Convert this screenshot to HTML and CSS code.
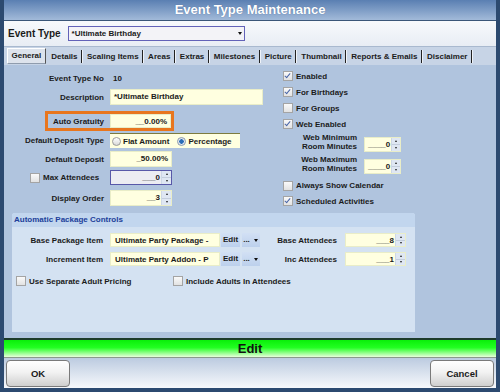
FILE: index.html
```html
<!DOCTYPE html>
<html lang="en">
<head>
    <meta charset="UTF-8">
    <title>Event Type Maintenance</title>
    <link rel="stylesheet" href="styles.css">
</head>
<body>
    <div class="window">
        <div class="titlebar">Event Type Maintenance</div>

        <div class="typebar">
            <span class="type-label">Event Type</span>
            <div class="combo">*Ultimate Birthday<span class="combo-arrow"></span></div>
        </div>

        <div class="tabs">
            <span class="tab active">General</span>
            <span class="tab">Details</span>
            <span class="tab">Scaling Items</span>
            <span class="tab">Areas</span>
            <span class="tab">Extras</span>
            <span class="tab">Milestones</span>
            <span class="tab">Picture</span>
            <span class="tab">Thumbnail</span>
            <span class="tab">Reports &amp; Emails</span>
            <span class="tab">Disclaimer</span>
        </div>

        <div class="body">
            <div class="columns">
                <div class="col-left">
                    <div class="row r-no">
                        <span class="lbl">Event Type No</span>
                        <span class="value">10</span>
                    </div>
                    <div class="row r-desc">
                        <span class="lbl">Description</span>
                        <div class="field desc">*Ultimate Birthday</div>
                    </div>
                    <div class="row r-grat">
                        <div class="highlight">
                            <span class="lbl short">Auto Gratuity</span>
                            <div class="field num grat">__0.00%</div>
                        </div>
                    </div>
                    <div class="row r-type">
                        <span class="lbl">Default Deposit Type</span>
                        <div class="radios">
                            <span class="radio"></span><span class="radio-text">Flat Amount</span>
                            <span class="radio on"></span><span class="radio-text">Percentage</span>
                        </div>
                    </div>
                    <div class="row r-dep">
                        <span class="lbl">Default Deposit</span>
                        <div class="field num dep">_50.00%</div>
                    </div>
                    <div class="row r-max">
                        <label class="lbl check-lbl"><span class="check"></span>Max Attendees</label>
                        <div class="field spin-field focus">
                            <span class="spin-text">___0</span>
                            <span class="spinner"><i class="up"></i><i class="down"></i></span>
                        </div>
                    </div>
                    <div class="row r-order">
                        <span class="lbl">Display Order</span>
                        <div class="field spin-field">
                            <span class="spin-text">__3</span>
                            <span class="spinner"><i class="up"></i><i class="down"></i></span>
                        </div>
                    </div>
                </div>

                <div class="col-right">
                    <div class="crow first"><span class="check on"></span>Enabled</div>
                    <div class="crow"><span class="check on"></span>For Birthdays</div>
                    <div class="crow"><span class="check"></span>For Groups</div>
                    <div class="crow"><span class="check on"></span>Web Enabled</div>
                    <div class="mrow">
                        <span class="mlbl">Web Minimum<br>Room Minutes</span>
                        <div class="field spin-field mins">
                            <span class="spin-text">____0</span>
                            <span class="spinner"><i class="up"></i><i class="down"></i></span>
                        </div>
                    </div>
                    <div class="mrow second">
                        <span class="mlbl">Web Maximum<br>Room Minutes</span>
                        <div class="field spin-field mins">
                            <span class="spin-text">____0</span>
                            <span class="spinner"><i class="up"></i><i class="down"></i></span>
                        </div>
                    </div>
                    <div class="crow cal"><span class="check"></span>Always Show Calendar</div>
                    <div class="crow"><span class="check on"></span>Scheduled Activities</div>
                </div>
            </div>

            <div class="pkg">
                <div class="pkg-head">Automatic Package Controls</div>
                <div class="prow">
                    <span class="plbl">Base Package Item</span>
                    <div class="field item">Ultimate Party Package -</div>
                    <span class="mini edit">Edit</span>
                    <span class="mini dots">...</span>
                    <span class="mini drop"><span class="combo-arrow"></span></span>
                    <span class="albl">Base Attendees</span>
                    <div class="field spin-field att">
                        <span class="spin-text">___8</span>
                        <span class="spinner"><i class="up"></i><i class="down"></i></span>
                    </div>
                </div>
                <div class="prow second">
                    <span class="plbl">Increment Item</span>
                    <div class="field item">Ultimate Party Addon - P</div>
                    <span class="mini edit">Edit</span>
                    <span class="mini dots">...</span>
                    <span class="mini drop"><span class="combo-arrow"></span></span>
                    <span class="albl">Inc Attendees</span>
                    <div class="field spin-field att">
                        <span class="spin-text">___1</span>
                        <span class="spinner"><i class="up"></i><i class="down"></i></span>
                    </div>
                </div>
                <div class="pchecks">
                    <span class="pcheck"><span class="check"></span>Use Separate Adult Pricing</span>
                    <span class="pcheck"><span class="check"></span>Include Adults In Attendees</span>
                </div>
            </div>
        </div>

        <div class="editbar">Edit</div>

        <div class="footer">
            <button class="btn">OK</button>
            <button class="btn">Cancel</button>
        </div>
    </div>
</body>
</html>
```

FILE: styles.css
```css
body {
    margin: 0;
    font-family: 'Liberation Sans', Arial, sans-serif;
    font-size: 8px;
    font-weight: bold;
    color: #1b1b1b;
    background: #b8c6d8;
}
.window {
    width: 500px;
    height: 392px;
    box-sizing: border-box;
    padding: 0 4px 4px 4px;
    background: #2c4a70;
    display: flex;
    flex-direction: column;
}
.titlebar {
    height: 20px;
    line-height: 20px;
    text-align: center;
    color: #fff;
    font-size: 13px;
    background: linear-gradient(#5a7fb2, #a2bad9);
    text-shadow: 0 0 1px #4a6a98;
    border-bottom: 1px solid #3a5678;
}
.typebar {
    height: 26px;
    display: flex;
    align-items: center;
    padding-left: 4px;
    background: linear-gradient(#f7f9fc, #e8edf4);
    border-bottom: 1px solid #a9b9cf;
    box-sizing: border-box;
}
.type-label {
    font-size: 10px;
    margin-right: 7px;
}
.combo {
    width: 177px;
    height: 15px;
    box-sizing: border-box;
    border: 1px solid #6262b8;
    background: #f3f3f7;
    padding-left: 3px;
    line-height: 13px;
    display: flex;
    justify-content: space-between;
    align-items: center;
}
.combo-arrow {
    width: 0;
    height: 0;
    border-left: 2.5px solid transparent;
    border-right: 2.5px solid transparent;
    border-top: 3px solid #111;
    margin-right: 2px;
}
.tabs {
    height: 18px;
    display: flex;
    align-items: center;
    padding-left: 3px;
    background: #c7d4e6;
    box-sizing: border-box;
}
.tab {
    height: 13px;
    line-height: 13px;
    padding: 0 3.5px;
    border-right: 1.5px solid #222;
    box-shadow: 1px 0 0 #eef2f8;
    margin-right: 1.5px;
    color: #1b1b1b;
}
.tab.active {
    height: 14px;
    background: #dde3ec;
    border: 1px solid #8f9cad;
    border-top-color: #fff;
    border-left-color: #fff;
    border-right-color: #555;
    box-shadow: none;
    margin-right: 2px;
}
.body {
    flex: 1;
    background: #b0c4de;
}
.columns {
    height: 148px;
    display: flex;
}
.col-left {
    width: 279px;
    padding-top: 6px;
}
.row {
    display: flex;
    align-items: center;
}
.lbl {
    width: 100px;
    margin-right: 6px;
    text-align: right;
}
.r-no { height: 14px; }
.r-desc { margin-top: 4px; }
.r-grat { margin-top: 6px; }
.r-type { margin-top: 2px; }
.r-dep { margin-top: 3px; }
.r-max { margin-top: 3px; }
.r-order { margin-top: 5px; }
.value { margin-left: 3px; }
.field {
    height: 16px;
    box-sizing: border-box;
    background: #ffffe0;
    border: 1px solid #e9edc8;
    line-height: 14px;
    padding: 0 3px;
}
.field.desc { width: 153px; }
.field.num { text-align: right; }
.field.dep { width: 62px; }
.highlight {
    margin-left: 41px;
    width: 129px;
    height: 20px;
    box-sizing: border-box;
    border: 3px solid #e8761e;
    display: flex;
    align-items: center;
}
.lbl.short { width: 56px; }
.field.grat {
    width: 61px;
    height: 14px;
    line-height: 13px;
}
.radios {
    width: 130px;
    height: 15px;
    box-sizing: border-box;
    background: #ffffe0;
    border-top: 1px solid #7d7b3e;
    display: flex;
    align-items: center;
    padding-left: 2px;
}
.radio {
    width: 7px;
    height: 7px;
    border-radius: 50%;
    border: 1px solid #9a9a9a;
    background: linear-gradient(#fff, #d8d8d8);
    margin-right: 2px;
}
.radio.on {
    background: radial-gradient(circle, #2a6db8 0 2px, #e4e8ee 2.5px);
    border-color: #8a9ab0;
    margin-left: 8px;
}
.check-lbl {
    display: flex;
    align-items: center;
    box-sizing: border-box;
    padding-left: 26px;
    text-align: left;
}
.check {
    display: inline-block;
    width: 8px;
    height: 8px;
    border: 1px solid #a4a4a4;
    background: linear-gradient(#fafafa, #e2e2e2);
    margin-right: 3px;
    position: relative;
    flex: none;
}
.check.on::after {
    content: "";
    position: absolute;
    left: 2px;
    top: 0;
    width: 2px;
    height: 5px;
    border-right: 1px solid #4a66a8;
    border-bottom: 1px solid #4a66a8;
    transform: rotate(40deg);
}
.spin-field {
    width: 62px;
    display: flex;
    padding: 0 0 0 3px;
}
.spin-field.focus {
    height: 15px;
    background: #ececf2;
    border-color: #5858a8;
}
.spin-text {
    flex: 1;
    text-align: right;
    padding-right: 1px;
}
.spinner {
    width: 9px;
    display: flex;
    flex-direction: column;
    background: #dfe7f3;
    border-left: 1px solid #cdd7e6;
}
.spinner i {
    flex: 1;
    display: flex;
    align-items: center;
    justify-content: center;
}
.spinner i::after {
    content: "";
    border-left: 1.5px solid transparent;
    border-right: 1.5px solid transparent;
}
.spinner .up::after { border-bottom: 2px solid #222; }
.spinner .down { border-top: 1px solid #c4cedd; }
.spinner .down::after { border-top: 2px solid #222; }
.col-right {
    padding-top: 3px;
}
.crow {
    height: 16px;
    display: flex;
    align-items: center;
}
.crow .check { margin-right: 3px; }
.crow.cal { margin-top: 4px; height: 15px; }
.mrow {
    height: 20px;
    display: flex;
    align-items: center;
}
.mrow.second { margin-top: 2px; }
.mlbl {
    width: 74px;
    margin-right: 7px;
    text-align: right;
    line-height: 9.5px;
}
.field.mins {
    width: 37px;
    height: 15px;
    margin-top: 4px;
}
.pkg {
    margin-left: 8px;
    width: 403px;
    height: 119px;
    background: #d4e2f2;
    border-radius: 3px 3px 0 0;
}
.pkg-head {
    height: 14px;
    line-height: 14px;
    padding-left: 2px;
    background: #c2d6ee;
    color: #20409a;
    border-radius: 3px 3px 0 0;
}
.prow {
    display: flex;
    align-items: center;
    height: 14px;
    margin-top: 6px;
}
.prow.second { margin-top: 5px; }
.plbl {
    width: 91px;
    margin-right: 7px;
    text-align: right;
}
.field.item {
    width: 110px;
    height: 14px;
    line-height: 13px;
    padding-left: 4px;
}
.mini {
    height: 14px;
    line-height: 13px;
    box-sizing: border-box;
    background: linear-gradient(#d2e0f4, #bcd0ec);
    text-align: center;
}
.mini.edit { width: 19px; margin-left: 1px; }
.mini.dots { width: 9px; margin-left: 2px; }
.mini.drop {
    width: 9px;
    display: flex;
    align-items: center;
    justify-content: center;
}
.mini.drop .combo-arrow { margin: 0; }
.albl {
    width: 77px;
    margin-right: 8px;
    text-align: right;
}
.field.att {
    width: 61px;
    height: 14px;
    line-height: 13px;
}
.pchecks {
    display: flex;
    align-items: center;
    height: 14px;
    margin-top: 8px;
    padding-left: 4px;
}
.pcheck {
    display: flex;
    align-items: center;
    width: 157px;
}
.pcheck .check { margin-right: 3px; }
.editbar {
    height: 20px;
    box-sizing: border-box;
    border-top: 2px solid #1d3b2a;
    border-bottom: 1px solid #8a9a8a;
    background: linear-gradient(#0aef0a, #22ff22 45%, #e8ffdc);
    text-align: center;
    font-size: 13px;
    line-height: 17px;
    color: #111;
}
.footer {
    height: 30px;
    display: flex;
    justify-content: space-between;
    align-items: center;
    padding: 0 2px;
    background: linear-gradient(#bccbe0, #f7f9fc);
}
.btn {
    width: 64px;
    height: 27px;
    border: 1px solid #7a7a7a;
    border-radius: 4px;
    background: linear-gradient(#ffffff, #f2f2f2 45%, #cfcfcf);
    font-family: 'Liberation Sans', Arial, sans-serif;
    font-weight: bold;
    font-size: 9.5px;
    color: #1b1b1b;
    padding: 0;
}
```
